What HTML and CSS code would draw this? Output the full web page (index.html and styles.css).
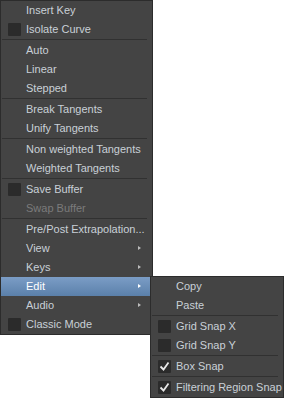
FILE: index.html
```html
<!DOCTYPE html>
<html lang="en">
<head>
    <meta charset="UTF-8">
    <meta name="viewport" content="width=device-width, initial-scale=1.0">
    <title>Curve Editor Menu</title>
    <link rel="stylesheet" href="styles.css">
</head>
<body>

<ul class="menu main-menu">
    <li class="item"><span class="mark"></span>Insert Key</li>
    <li class="item"><span class="mark box"></span>Isolate Curve</li>
    <li class="sep"></li>
    <li class="item"><span class="mark"></span>Auto</li>
    <li class="item"><span class="mark"></span>Linear</li>
    <li class="item"><span class="mark"></span>Stepped</li>
    <li class="sep"></li>
    <li class="item"><span class="mark"></span>Break Tangents</li>
    <li class="item"><span class="mark"></span>Unify Tangents</li>
    <li class="sep"></li>
    <li class="item"><span class="mark"></span>Non weighted Tangents</li>
    <li class="item"><span class="mark"></span>Weighted Tangents</li>
    <li class="sep"></li>
    <li class="item"><span class="mark box"></span>Save Buffer</li>
    <li class="item disabled"><span class="mark"></span>Swap Buffer</li>
    <li class="sep"></li>
    <li class="item"><span class="mark"></span>Pre/Post Extrapolation...</li>
    <li class="item has-sub"><span class="mark"></span>View<span class="arrow"></span></li>
    <li class="item has-sub"><span class="mark"></span>Keys<span class="arrow"></span></li>
    <li class="item has-sub active"><span class="mark"></span>Edit<span class="arrow"></span>
        <ul class="menu sub-menu">
            <li class="item"><span class="mark"></span>Copy</li>
            <li class="item"><span class="mark"></span>Paste</li>
            <li class="sep"></li>
            <li class="item"><span class="mark box"></span>Grid Snap X</li>
            <li class="item"><span class="mark box"></span>Grid Snap Y</li>
            <li class="sep"></li>
            <li class="item"><span class="mark box checked"><svg viewBox="0 0 13 13" width="13" height="13"><path d="M2.5 6.5 L5.5 9.5 L10.5 2.5" fill="none" stroke="#e8e8e8" stroke-width="1.8"/></svg></span>Box Snap</li>
            <li class="sep"></li>
            <li class="item"><span class="mark box checked"><svg viewBox="0 0 13 13" width="13" height="13"><path d="M2.5 6.5 L5.5 9.5 L10.5 2.5" fill="none" stroke="#e8e8e8" stroke-width="1.8"/></svg></span>Filtering Region Snap</li>
        </ul>
    </li>
    <li class="item has-sub"><span class="mark"></span>Audio<span class="arrow"></span></li>
    <li class="item"><span class="mark box"></span>Classic Mode</li>
</ul>

</body>
</html>
```

FILE: styles.css
```css
html, body {
    height: 100%;
}
body {
    margin: 0;
    min-height: 399px;
    background-color: #fff;
    font-family: 'Liberation Sans', Arial, sans-serif;
    font-size: 11px;
}
.menu {
    list-style: none;
    margin: 0;
    padding: 0;
    background-color: #444;
    border: 1px solid #2c2c2c;
}
.main-menu {
    width: 151px;
}
.item {
    position: relative;
    display: flex;
    align-items: center;
    height: 19px;
    line-height: 19px;
    padding-left: 7px;
    color: #c9d0d7;
    white-space: nowrap;
}
.item.disabled {
    color: #7b7b7b;
}
.mark {
    width: 13px;
    height: 13px;
    margin-right: 5px;
    flex-shrink: 0;
}
.mark.box {
    background-color: #2b2b2b;
    border-radius: 1px;
}
.mark svg {
    display: block;
}
.sep {
    height: 1px;
    border-top: 1px solid #313131;
    margin: 0 5px 0 1px;
}
.arrow {
    position: absolute;
    right: 11px;
    top: 7px;
    width: 0;
    height: 0;
    border-top: 2.5px solid transparent;
    border-bottom: 2.5px solid transparent;
    border-left: 3px solid #bdbdbd;
}
.item.active {
    z-index: 2;
    background: linear-gradient(#7b9dc6, #5b80aa);
    color: #fff;
}
.item.active .arrow {
    border-left-color: #fff;
}
.sub-menu {
    position: absolute;
    z-index: 3;
    left: 149px;
    top: -1px;
    width: 132px;
}
.sub-menu .item {
    color: #c9d0d7;
    background: none;
}
```
